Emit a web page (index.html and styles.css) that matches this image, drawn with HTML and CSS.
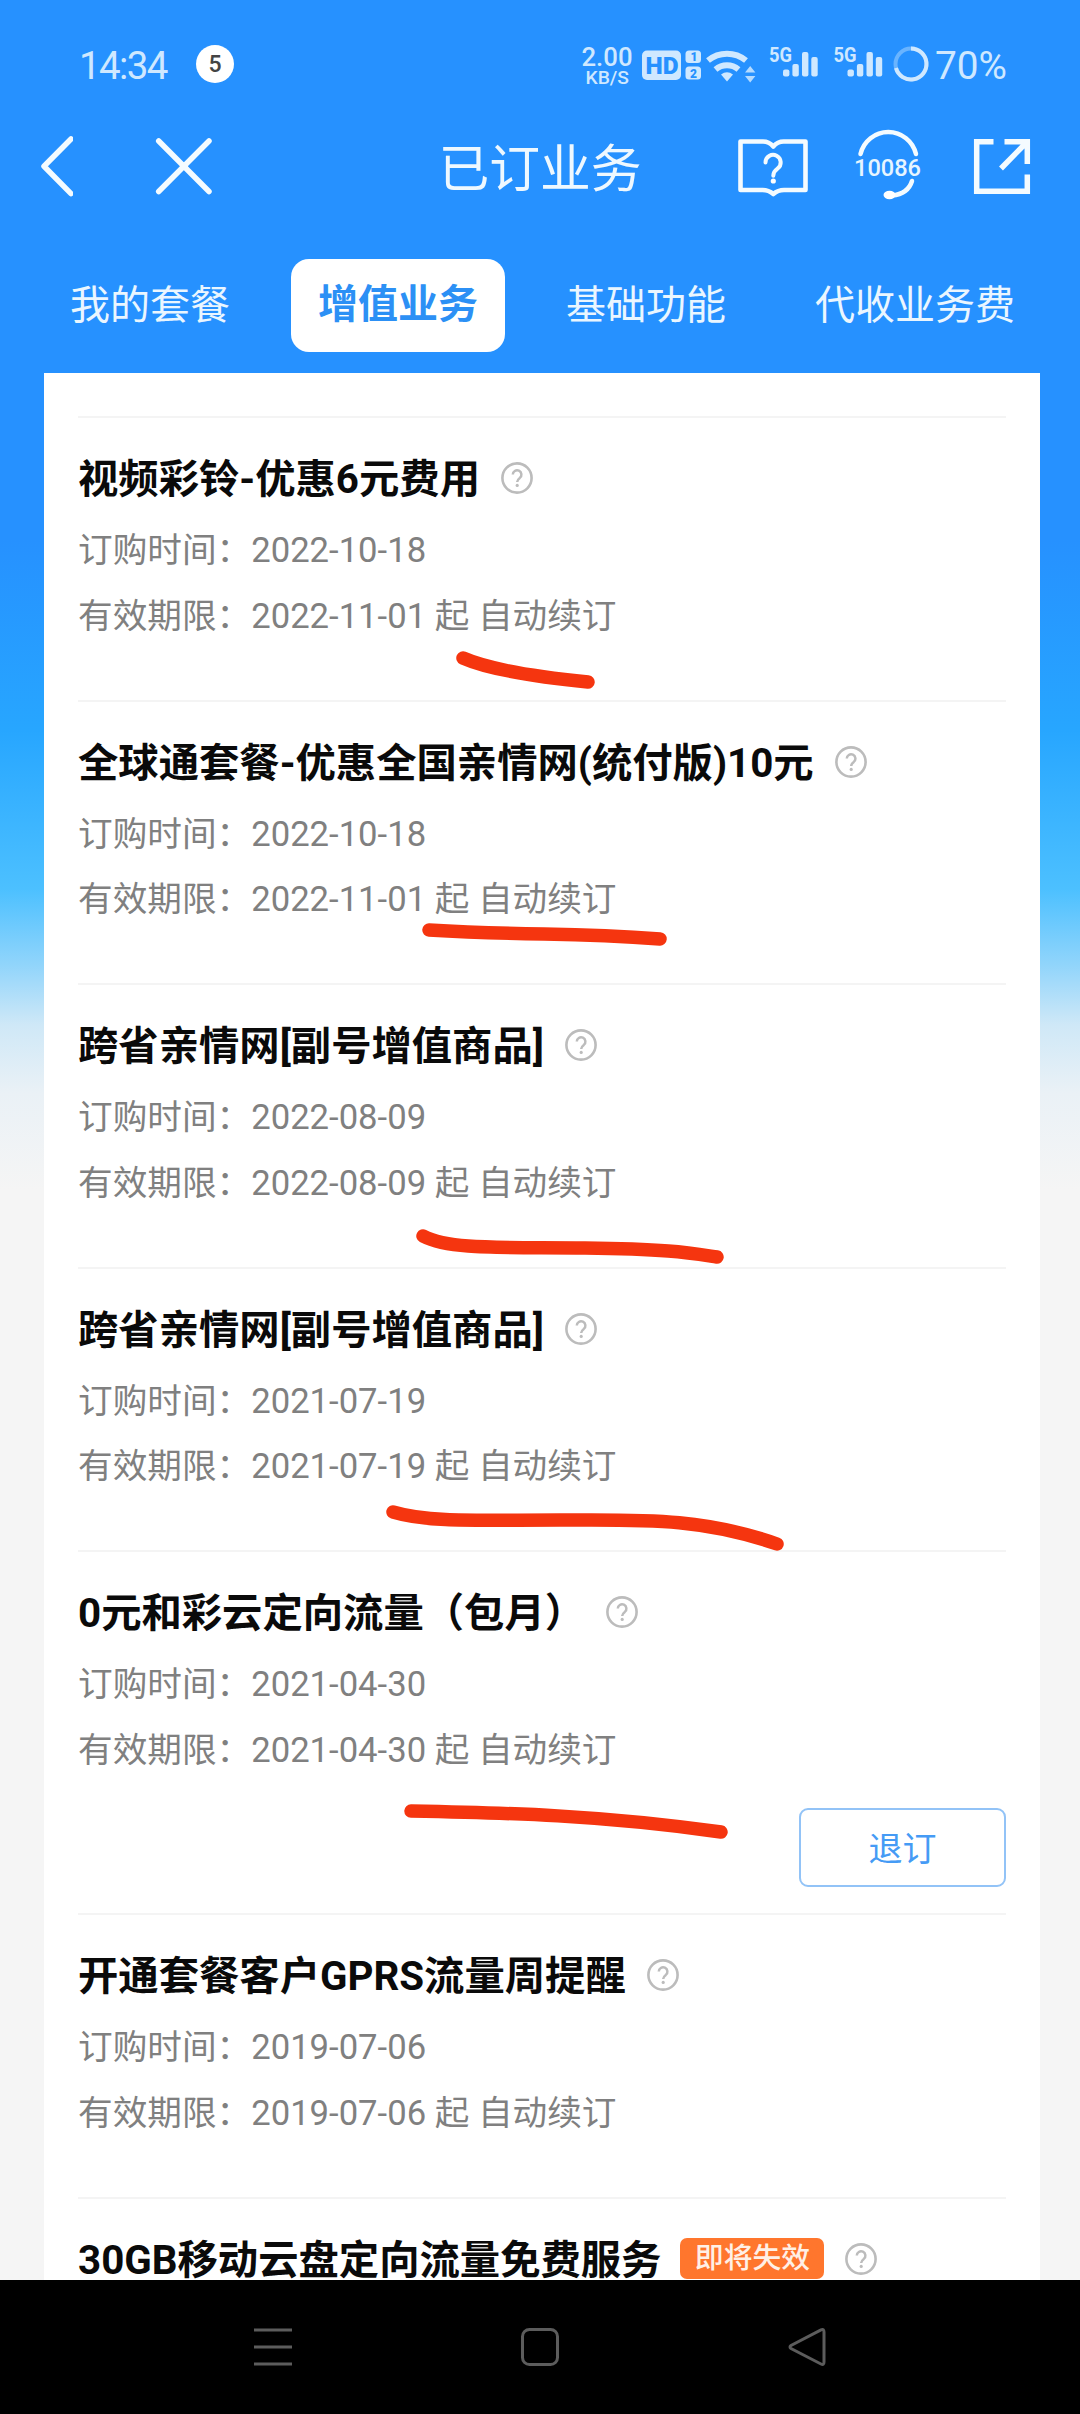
FILE: index.html
```html
<!DOCTYPE html>
<html lang="zh-CN">
<head>
<meta charset="utf-8">
<title>已订业务</title>
<link rel="stylesheet" href="styles.css">
</head>
<body>
<svg class="defs" width="0" height="0">
  <symbol id="help" viewBox="0 0 32 32">
    <circle cx="16" cy="16" r="14.6" fill="none" stroke="#bcbcbc" stroke-width="2.6"/>
    <path d="M11.8 12.6a4.3 4.3 0 1 1 7 3.3c-1.700 1.300-2.600 2-2.600 4.200" fill="none" stroke="#bcbcbc" stroke-width="2.5"/>
    <circle cx="16.200" cy="23.400" r="1.600" fill="#bcbcbc"/>
  </symbol>
  <symbol id="bars" viewBox="0 0 50 34">
    <rect x="14" y="25.5" width="6.400" height="7" rx="2"/>
    <rect x="23.400" y="20" width="6.400" height="12.500" rx="2"/>
    <rect x="33" y="8" width="6.400" height="24.500" rx="2"/>
    <rect x="42.300" y="13" width="6.400" height="19.500" rx="2"/>
  </symbol>
</svg>
<div class="phone">
  <header class="status">
    <div class="status-left">
      <span class="clock">14:34</span>
      <span class="count">5</span>
    </div>
    <svg class="status-right" width="430" height="56" viewBox="580 36 430 56">
      <text x="581.5" y="66" font-size="25" font-weight="500" textLength="51" lengthAdjust="spacingAndGlyphs">2.00</text>
      <text x="585.5" y="84" font-size="19" font-weight="500" textLength="43.5" lengthAdjust="spacingAndGlyphs">KB/S</text>
      <rect x="642" y="50.5" width="39" height="29.5" rx="5"/>
      <text x="645.5" y="73.5" font-size="23" font-weight="900" class="cut" textLength="33" lengthAdjust="spacingAndGlyphs">HD</text>
      <rect x="685.5" y="50.5" width="15.5" height="12.5" rx="3.5"/>
      <rect x="685.5" y="66.5" width="15.5" height="13" rx="3.5"/>
      <text x="690.5" y="61" font-size="12" font-weight="900" class="cut">1</text>
      <text x="690" y="77.5" font-size="12" font-weight="900" class="cut">2</text>
      <g fill="none" class="line" stroke-width="6">
        <path d="M708 60.5a30 30 0 0 1 38 0"/>
        <path d="M715.5 69.5a18 18 0 0 1 23 0"/>
      </g>
      <path d="M721 74.5q6-4.5 12 0l-6 7z"/>
      <path d="M745 72.5l5.2-6.5 5.2 6.5zM745 76l5.2 6.5 5.2-6.5z" opacity=".85"/>
      <text x="769" y="62" font-size="20" font-weight="700" textLength="23" lengthAdjust="spacingAndGlyphs">5G</text>
      <use href="#bars" x="769" y="44" width="50" height="34"/>
      <text x="833.5" y="62" font-size="20" font-weight="700" textLength="23" lengthAdjust="spacingAndGlyphs">5G</text>
      <use href="#bars" x="833.5" y="44" width="50" height="34"/>
      <circle cx="911" cy="64" r="15.5" fill="none" class="line" stroke-width="4" opacity=".4"/>
      <path d="M911 48.5A15.5 15.5 0 1 1 896 68" fill="none" class="line" stroke-width="4"/>
      <text x="935" y="78.5" font-size="38.5" textLength="72" lengthAdjust="spacingAndGlyphs">70%</text>
    </svg>
  </header>

  <nav class="titlebar">
    <div class="side">
      <svg width="32" height="64" viewBox="41 134 32 64" class="ico"><path d="M71 139L44 166.300l27 27.300"/></svg>
      <svg width="58" height="58" viewBox="155 137 58 58" class="ico"><path d="M158.700 141L209 191.500M209 141l-50.300 50.500"/></svg>
    </div>
    <h1>已订业务</h1>
    <div class="side tools">
      <svg width="72" height="64" viewBox="737 134 72 64" class="ico">
        <path stroke-width="4.600" d="M740.500 141.500H763q6 0 10.300 5q4.300-5 10.300-5H805.500V190H784q-6 0-10.700 4q-4.700-4-10.700-4H740.500z"/>
        <path stroke-width="4" d="M765.500 162.500a7.600 7.600 0 1 1 12 6.200c-3 2.200-4.200 3.500-4.200 7"/>
        <circle cx="773.300" cy="181" r="2.600" fill="#fff" stroke="none"/>
      </svg>
      <svg width="70" height="76" viewBox="853 128 70 76" class="ico">
        <path stroke-width="4.500" d="M860.500 154a28.500 28.500 0 0 1 55.500 0M912 181q-4 13-20 14.500"/>
        <ellipse cx="889.500" cy="195" rx="6" ry="4.200" fill="#fff" stroke="none"/>
        <text x="854" y="176" font-size="24" font-weight="500" textLength="67" lengthAdjust="spacingAndGlyphs">10086</text>
      </svg>
      <svg width="60" height="60" viewBox="972 136 60 60" class="ico square">
        <path stroke-width="5.500" d="M993.500 141.700H976.700V191.300H1027.300V174.500M1004.500 141.700H1027.300V164M1025.500 143.500L1001 168.500"/>
      </svg>
    </div>
  </nav>

  <div class="tabs">
    <span class="tab">我的套餐</span>
    <span class="tab active">增值业务</span>
    <span class="tab">基础功能</span>
    <span class="tab last">代收业务费</span>
  </div>

  <main class="card">
    <section class="item">
      <h2>视频彩铃-优惠6元费用<svg class="help"><use href="#help"/></svg></h2>
      <p>订购时间：2022-10-18</p>
      <p>有效期限：2022-11-01 起 自动续订</p>
    </section>
    <section class="item">
      <h2>全球通套餐-优惠全国亲情网(统付版)10元<svg class="help"><use href="#help"/></svg></h2>
      <p>订购时间：2022-10-18</p>
      <p>有效期限：2022-11-01 起 自动续订</p>
    </section>
    <section class="item">
      <h2>跨省亲情网[副号增值商品]<svg class="help"><use href="#help"/></svg></h2>
      <p>订购时间：2022-08-09</p>
      <p>有效期限：2022-08-09 起 自动续订</p>
    </section>
    <section class="item">
      <h2>跨省亲情网[副号增值商品]<svg class="help"><use href="#help"/></svg></h2>
      <p>订购时间：2021-07-19</p>
      <p>有效期限：2021-07-19 起 自动续订</p>
    </section>
    <section class="item with-action">
      <h2>0元和彩云定向流量（包月）<svg class="help"><use href="#help"/></svg></h2>
      <p>订购时间：2021-04-30</p>
      <p>有效期限：2021-04-30 起 自动续订</p>
      <button class="cancel">退订</button>
    </section>
    <section class="item">
      <h2>开通套餐客户GPRS流量周提醒<svg class="help"><use href="#help"/></svg></h2>
      <p>订购时间：2019-07-06</p>
      <p>有效期限：2019-07-06 起 自动续订</p>
    </section>
    <section class="item last-item">
      <h2>30GB移动云盘定向流量免费服务<span class="badge">即将失效</span><svg class="help"><use href="#help"/></svg></h2>
    </section>
  </main>

  <footer class="sysnav">
    <svg width="38" height="40" viewBox="0 0 38 40"><path d="M0 3h38M0 20h38M0 37h38"/></svg>
    <svg width="38" height="40" viewBox="0 0 38 40"><rect x="1.500" y="2.500" width="35" height="35" rx="7"/></svg>
    <svg width="38" height="40" viewBox="0 0 38 40"><path d="M33 2.800Q36 1.500 36 5V35Q36 38.500 33 37L3 21.500Q1 20 3 18.500z"/></svg>
  </footer>

  <svg class="marks" width="1080" height="2414" viewBox="0 0 1080 2414">
    <path d="M463 658Q497 673 588 682"/>
    <path d="M429 930Q480 933 544 934T660 939"/>
    <path d="M423 1236C450 1250 500 1247 585 1248S690 1253 717 1257"/>
    <path d="M393 1512C430 1523 480 1520 560 1520S700 1517 777 1544"/>
    <path d="M411 1811C510 1813 600 1815 721 1832"/>
  </svg>
</div>
</body>
</html>
```
FILE: styles.css
```css
* {
  box-sizing: border-box;
}

body {
  margin: 0;
  font-family: Roboto, "Noto Sans CJK SC", sans-serif;
}

.defs {
  display: block;
}

.phone {
  position: relative;
  display: flex;
  flex-direction: column;
  width: 1080px;
  height: 2414px;
  overflow: hidden;
  background: linear-gradient(#2691ff 540px, #27a6ff 730px, #4cc0ff 889px, #92d5fb 966px, #cfe8f7 1025px, #eaf1f6 1093px, #f5f5f5 1190px);
}

.status {
  display: flex;
  justify-content: space-between;
  align-items: center;
  height: 128px;
  padding: 0 70px 0 79px;
}

.status-left {
  display: flex;
  align-items: center;
  gap: 28px;
}

.clock {
  width: 89px;
  padding-top: 3px;
  font-size: 38.5px;
  line-height: 40px;
  letter-spacing: -1.6px;
  white-space: nowrap;
  color: #cfe8ff;
}

.count {
  width: 38px;
  height: 38px;
  border-radius: 50%;
  background: #fff;
  color: #444;
  font-size: 23px;
  font-weight: 500;
  line-height: 39px;
  text-align: center;
}

.status-right {
  fill: #cfe8ff;
}

.status-right .line {
  stroke: #cfe8ff;
}

.status-right .cut {
  fill: #2691ff;
}

.titlebar {
  display: flex;
  align-items: center;
  justify-content: space-between;
  height: 76px;
  padding: 0 48px 0 41px;
}

.titlebar h1 {
  margin: 0;
  padding: 7px 0 0 7px;
  font-size: 50.8px;
  font-weight: 400;
  line-height: 69px;
  color: #eef8ff;
}

.side {
  display: flex;
  align-items: center;
  gap: 82px;
  width: 295px;
}

.side svg {
  flex: none;
}

.tools {
  gap: 0;
  justify-content: flex-start;
}

.tools svg + svg {
  margin-left: 44px;
}

.tools svg + .square {
  margin-left: 49px;
}

.ico {
  fill: none;
  stroke: #f4fbff;
  stroke-width: 5.5;
  stroke-linecap: round;
  stroke-linejoin: round;
}

.square {
  stroke-linecap: butt;
  stroke-linejoin: miter;
}

.ico text {
  fill: #e6f5ff;
  stroke: none;
}

.tabs {
  display: flex;
  align-items: center;
  gap: 61px;
  height: 169px;
  padding: 55px 0 21px 70px;
}

.tab {
  font-size: 40px;
  line-height: 93px;
  white-space: nowrap;
  color: #eaf6ff;
}

.tab.active {
  width: 214px;
  height: 93px;
  border-radius: 18px;
  background: #fff;
  color: #2c90f5;
  font-weight: 700;
  line-height: 92px;
  text-align: center;
}

.tab.last {
  margin-left: 28px;
}

.card {
  flex: 1;
  min-height: 0;
  margin: 0 40px 0 44px;
  padding: 43px 34px 0 34px;
  overflow: hidden;
  background: #fff;
}

.item {
  height: 283.500px;
  padding-top: 37px;
  border-top: 2px solid #f4f4f4;
}

.item.with-action {
  height: 363px;
}

.item.last-item {
  height: auto;
}

.item h2 {
  display: flex;
  align-items: center;
  height: 50px;
  margin: 0 0 13px;
  font-size: 40.350px;
  font-weight: 700;
  line-height: 48px;
  white-space: nowrap;
  color: #0a0a0a;
}

.item p {
  margin: 0;
  font-size: 34.650px;
  line-height: 65.600px;
  white-space: nowrap;
  color: #808080;
}

.help {
  width: 32px;
  height: 32px;
  margin: -4px 0 0 21px;
}

.cancel {
  display: block;
  width: 207px;
  height: 79px;
  margin: 25px 0 0 auto;
  padding: 0 0 3px;
  border: 2.500px solid #92c3f7;
  border-radius: 9px;
  background: #fff;
  color: #459bf5;
  font: inherit;
  font-size: 34px;
}

.badge {
  width: 144px;
  height: 41px;
  margin: -5px 0 0 19px;
  border-radius: 7px;
  background: #ff762d;
  color: #fff0e6;
  font-size: 28.800px;
  font-weight: 500;
  line-height: 41px;
  text-align: center;
}

.sysnav {
  display: flex;
  justify-content: space-between;
  height: 134px;
  padding: 47px 254px 0;
  background: #000;
}

.sysnav svg {
  fill: none;
  stroke: #5c5c5c;
  stroke-width: 3;
}

.marks {
  position: absolute;
  top: 0;
  left: 0;
  fill: none;
  stroke: #f5350f;
  stroke-width: 13.500;
  stroke-linecap: round;
}
```
